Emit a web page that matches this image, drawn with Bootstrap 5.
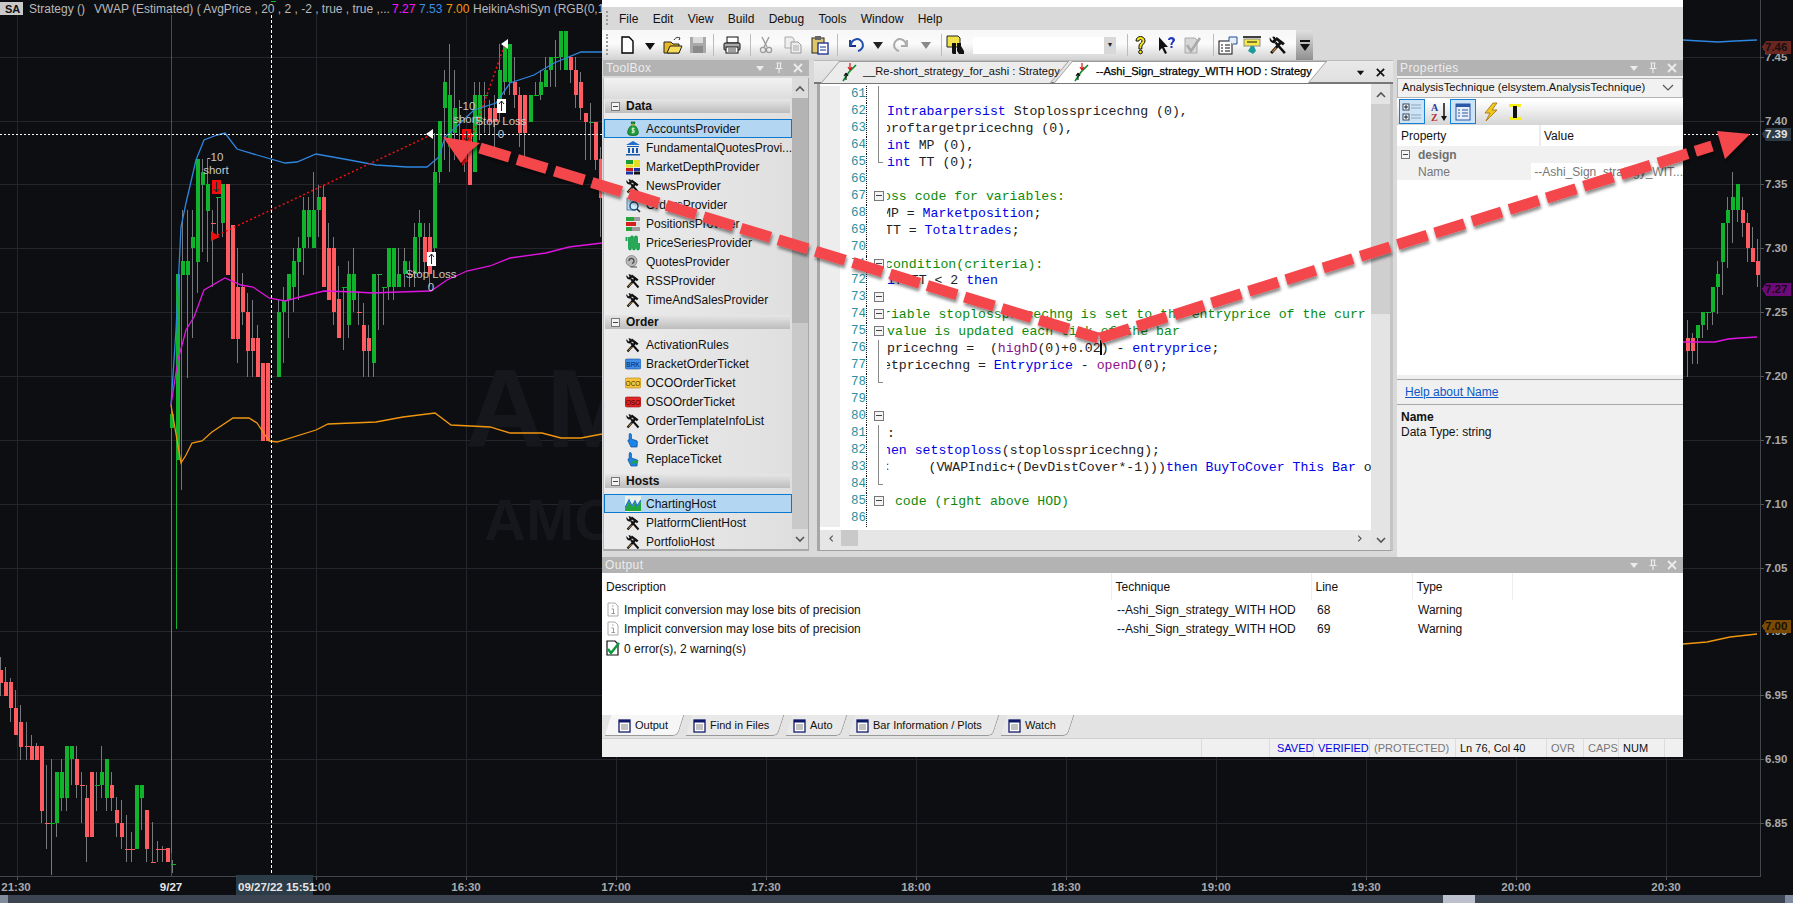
<!DOCTYPE html>
<html lang="en">
<head>
<meta charset="UTF-8">
<title>Strategy editor over chart</title>
<link rel="stylesheet" href="https://cdn.jsdelivr.net/npm/bootstrap@5.3.0/dist/css/bootstrap.min.css">
<style>
body { width:1793px; height:903px; overflow:hidden; background:#0d0e12; margin:0; position:relative; font-family:"Liberation Sans",Arial,sans-serif; font-size:12px; line-height:1; color:#111; }
.chart-svg, .arrow-svg { position:absolute; left:0; top:0; width:1793px; height:903px; }
.chart-svg text { font-family:"Liberation Sans",Arial,sans-serif; }
.arrow-svg { z-index:5; pointer-events:none; }
.app-window { position:absolute; left:602px; top:0; width:1081px; height:757px; background:#d9d9d9; z-index:2; }
.top-strip { height:7px; background:#fff; }
.menu-row { height:23px; padding-left:17px; position:relative; }
.menu-row a { color:#111; text-decoration:none; margin-right:14.3px; }
.grip::before { content:""; position:absolute; left:4px; top:4px; bottom:5px; border-left:2px dotted #999; }
.tool-row { width:711px; height:30px; padding-left:25px; position:relative; background:linear-gradient(#f7f7f7,#fbfbfb 45%,#d2d2d2); display:grid; align-items:center; grid-template-columns:23px 23px 25px 15px 19px 18px 16px 27px 26px 18px 18px 23px 24px 24px 15px 15px 17px 154px 13px 27px 25px 21px 15px 24px 26px 26px 10px; }
.tool-row > svg { width:20px; height:20px; margin-left:-10px; }
.tool-row > .tb-sep { width:1px; height:22px; background:#bcbcbc; margin:0; }
.tb-combo { width:143px; height:17px; background:#fff; display:flex; justify-content:flex-end; margin-left:0; }
.tb-combo span { width:12px; background:#d8d8d8; color:#222; text-align:center; font-size:8px; line-height:15px; }
.tb-end { position:absolute; right:0; top:0; width:17px; height:30px; background:linear-gradient(#e0e0e0,#8f8f8f); display:flex; flex-direction:column; align-items:center; justify-content:center; gap:2px; }
.tb-end i { display:block; }
.tb-end .dash { width:10px; height:2px; background:#111; }
.tb-end .tri { border:5px solid transparent; border-top:7px solid #111; border-bottom:0; }
.main-row { height:491px; }
.dock-title { height:16px; background:#b3b3b3; color:#ececec; padding:0 5px 0 3px; font-size:12px; letter-spacing:.4px; }
.dock-title svg { width:12px; height:12px; margin-left:7px; }
.toolbox-panel { width:206px; margin-left:1px; }
.toolbox-body { height:473px; margin-top:2px; border-left:1px solid #bbb; border-bottom:2px solid #a9a9a9; border-right:1px solid #a9a9a9; background:linear-gradient(90deg,#ececec,#dedede); }
.toolbox-list { width:188px; overflow:hidden; }
.toolbox-top { height:21px; background:linear-gradient(#f2f2f2,#dcdcdc); }
.group-head { height:14px; margin:0 2px 6px 1px; background:linear-gradient(#e6e6e6,#bdbdbd); font-weight:bold; padding-left:6px; gap:6px; }
.fold-box { width:9px; height:9px; border:1px solid #777; background:#f4f4f4; position:relative; display:block; flex:none; }
.fold-box::after { content:""; position:absolute; left:1px; right:1px; top:3px; height:1px; background:#444; }
.tool-group { --bs-list-group-bg:transparent; --bs-list-group-border-width:0; border-radius:0; margin-bottom:0; }
.tool-group .list-group-item { height:19px; padding:0 0 0 21px; display:flex; align-items:center; gap:5px; background:transparent; color:#111; font-size:12px; white-space:nowrap; border:0; }
.tool-group .list-group-item svg { width:16px; height:16px; flex:none; }
.tool-group .list-group-item.picked { background:#b3d7f3; outline:1px solid #0a78cf; outline-offset:-1px; margin-right:0; }
.toolbox-gap { height:6px; }
.scroll-v { width:16px; background:#c9c9c9; }
.scroll-v .thumb { height:225px; background:#b4b4b4; }
.scroll-v span { display:flex; height:20px; align-items:center; justify-content:center; background:#dcdcdc; }
.chev { width:10px; height:7px; }
.editor-panel { width:579px; margin-left:5px; position:relative; }
.doc-tabs { height:24px; position:relative; background:linear-gradient(#e9e9e9,#e0e0e0); border-bottom:2px solid #777; border-top:1px solid #bbb; }
.doc-tab { position:absolute; top:0; height:22px; display:flex; align-items:center; white-space:nowrap; font-size:11.1px; }
.doc-tab::before { content:""; position:absolute; top:0; bottom:0; left:0; right:0; transform:skewX(-40deg); border:1px solid #9d9d9d; border-bottom:0; background:#ececec; z-index:0; }
.doc-tab > * { position:relative; z-index:1; }
.doc-tab svg { width:18px; height:20px; margin-right:4px; flex:none; }
.tab-back { left:16px; width:230px; padding-left:11px; }
.tab-front { left:249px; width:247px; padding-left:10px; color:#000; -webkit-text-stroke:.25px #000; }
.tab-front svg { margin-right:5px; }
.tab-front::before { background:#fff; right:-8px; }
.tab-tools { position:absolute; right:7px; top:6px; gap:9px; }
.tab-tools svg { width:11px; height:11px; }
.editor-frame { height:467px; border-left:3px solid #a7a7a7; border-right:3px solid #c4c4c4; border-bottom:1px solid #a0a0a0; margin-left:3px; margin-right:0; background:#fff; }
.code-area { height:446px; overflow:hidden; }
.code-col { min-width:0; }
.code-line { height:16.96px; display:flex; align-items:center; }
.code-line:first-child { margin-top:2px; }
.gut-col { width:20px; height:100%; background:#ededed; flex:none; }
.num-col { width:27px; height:100%; text-align:right; color:#2b8f9f; font-family:"Liberation Mono",monospace; font-size:12.5px; line-height:17px; border-right:1px dotted #111; flex:none; padding-right:0; }
.fold-col { width:20px; height:100%; flex:none; position:relative; }
.bar::before { content:""; position:absolute; left:11px; top:0; bottom:0; border-left:1px solid #888; }
.hook::before { content:""; position:absolute; left:11px; top:0; height:9px; width:5px; border-left:1px solid #888; border-bottom:1px solid #888; }
.fold-col .fold-box { position:absolute; left:7px; top:3px; width:10px; height:10px; }
.code-text { font-family:"Liberation Mono",monospace; font-size:13.2px; white-space:pre; overflow:hidden; flex:1; min-width:0; color:#222; line-height:17px; }
.kw { color:#0000e6; } .cm { color:#0c8a0c; } .fn { color:#8a0f8a; }
.cut2 { margin-left:-2px; display:inline-block; } .cut4 { margin-left:-4px; display:inline-block; } .cut6 { margin-left:-6px; display:inline-block; }
.caret-bar { display:inline-block; width:0; height:15px; border-left:2px solid #000; margin:0 -1px; vertical-align:-3px; }
.scroll-code { width:19px; background:#e4e4e4; }
.scroll-code .thumb { height:210px; background:#cfcfcf; }
.scroll-code .end { height:20px; display:flex; align-items:center; justify-content:center; flex:none; }
.scroll-h { height:20px; background:#e6e6e6; padding:0 6px 4px; }
.scroll-h .thumb { width:17px; height:16px; background:#c9c9c9; margin-left:5px; }
.props-panel { width:286px; margin-left:4px; background:#f0f0f0; height:497px; position:relative; }
.props-select { height:20px; margin-top:2px; background:#f1f1f1; border:1px solid #b4b4b4; padding:0 4px; font-size:11.2px; }
.props-select svg { width:12px; height:8px; margin-right:4px; }
.props-tools { height:27px; background:linear-gradient(#fff 10%,#d5d5d5); padding-left:2px; }
.props-tools span { width:26px; height:25px; display:flex; align-items:center; justify-content:center; margin-right:5px; }
.props-tools span.on { background:#cde4f7; outline:1px solid #1a7fd0; outline-offset:-1px; }
.props-tools svg { width:20px; height:20px; }
.props-grid { height:250px; background:#fff; }
.props-grid .g-row { display:flex; align-items:center; }
.g-left { width:144px; height:100%; padding-left:4px; }
.g-head { height:21px; }
.g-head .g-left { border-right:2px solid #ececec; display:flex; align-items:center; }
.g-head .g-right { padding-left:3px; }
.g-design { height:17px; background:#f1f1f1; color:#6f6f6f; font-weight:bold; padding-left:4px; gap:8px; }
.g-name { height:17px; }
.g-name .g-left { background:#f1f1f1; color:#777; padding-left:21px; display:flex; align-items:center; }
.g-name .g-right { color:#777; padding-left:3px; white-space:nowrap; }
.props-help { height:26px; border-top:1px solid #a8a8a8; border-bottom:1px solid #a8a8a8; padding-left:8px; margin-top:4px; background:#f0f0f0; }
.props-help a { color:#0a58ca; font-size:12px; }
.props-desc { padding:5px 4px; line-height:15px; }
.output-head { margin-top:6px; height:16px; }
.output-body { height:142px; background:#fff; }
.output-table { --bs-table-bg:transparent; --bs-table-border-color:transparent; table-layout:fixed; width:910px; margin:0; font-size:12px; color:#111; }
.output-table col.c-a { width:509px; } .output-table col.c-b { width:200px; } .output-table col.c-c { width:101px; } .output-table col.c-d { width:100px; }
.output-table th { font-weight:normal; height:27px; padding:0 0 0 4px; vertical-align:middle; border-right:1px solid #eee; }
.output-table td { height:19px; padding:0 0 0 6px; white-space:nowrap; vertical-align:middle; }
.output-table td svg { width:12px; height:15px; vertical-align:-3px; margin-right:5px; margin-left:-1px; }
.output-table td.sumup { padding-left:5px; }
.output-table td.sumup svg { width:15px; height:16px; margin-right:3px; }
.bottom-tabs { height:23px; background:#e3e3e3; padding-left:4px; font-size:11px; }
.out-tab { height:21px; position:relative; display:flex; align-items:center; gap:3px; padding-left:12px; }
.out-tab::before { content:""; position:absolute; inset:0 0 0 8px; transform:skewX(-18deg); border-right:1px solid #999; border-bottom:1px solid #999; border-bottom-right-radius:5px; background:#e9e9e9; }
.out-tab > * { position:relative; }
.out-tab svg { width:14px; height:14px; }
.out-1 { width:75px; } .out-2 { width:100px; } .out-3 { width:63px; } .out-4 { width:152px; } .out-5 { width:75px; }
.out-1::before { background:#f6f6f6; left:2px; }
.status-row { height:19px; background:#f0f0f0; border-top:1px solid #d0d0d0; font-size:11px; }
.status-row > div { height:100%; border-right:1px solid #dcdcdc; padding-left:4px; display:flex; align-items:center; white-space:nowrap; overflow:hidden; }
.st-a { width:600px; } .st-b { width:68px; } .st-c { width:44px; color:#0000e0; padding-left:7px !important; } .st-d { width:56px; color:#0000e0; } .st-e { width:86px; color:#777; } .st-f { width:91px; } .st-g { width:37px; color:#777; } .st-h { width:35px; color:#777; } .st-i { width:46px; }
</style>
</head>
<body>

<svg class="d-none">
  <symbol id="i-tools" viewBox="0 0 16 16"><path d="M2.5 14.5 11 5" stroke="#111" stroke-width="2.2" fill="none"/><path d="M7 1.5l6.5 5-1.6 1.8L5.4 3.2z" fill="#111"/><path d="M13.5 14.5 6 6" stroke="#111" stroke-width="2" fill="none"/><path d="M1.5 2a3.4 3.4 0 0 0 4 4.4L7 4.6 5.4 1.4a3.4 3.4 0 0 0-2 .1L4.6 3.6 3.4 4.6z" fill="#111"/><path d="M3.5 13.5 6.5 10.2" stroke="#d58a2a" stroke-width="1"/></symbol>
  <symbol id="i-bag" viewBox="0 0 16 16"><path d="M6 1h4L9 4c3 2 5 6 4 9-1 2-9 2-10 0-1-3 1-7 4-9z" fill="#1e9c3a" stroke="#0d4f1c" stroke-width=".7"/><rect x="6" y="3.4" width="4" height="1" fill="#e8c93a"/><path d="M9.6 7.4H7.2v2h2v2H6.6M8 6.4v6" stroke="#e8f6d8" fill="none" stroke-width=".9"/></symbol>
  <symbol id="i-bank" viewBox="0 0 16 16"><path d="M8 1 15 5H1z" fill="#1f6fd0"/><path d="M2 6h12v1H2zM3 8h2v5H3zM7 8h2v5H7zM11 8h2v5h-2zM1 14h14v1.5H1z" fill="#1558ad"/></symbol>
  <symbol id="i-depth" viewBox="0 0 16 16"><rect x="1" y="1" width="7" height="4" fill="#1c9c2e"/><rect x="9" y="1" width="6" height="7" fill="#e6e01e"/><rect x="1" y="5.5" width="7" height="3" fill="#e6e01e"/><rect x="1" y="9" width="7" height="3" fill="#c81e1e"/><rect x="9" y="9" width="6" height="3" fill="#1d2f9c"/><rect x="1" y="12.5" width="7" height="3" fill="#1d2f9c"/><rect x="9" y="12.5" width="6" height="3" fill="#111"/></symbol>
  <symbol id="i-orders" viewBox="0 0 16 16"><rect x="2" y="1" width="9" height="12" fill="#b8d2e8" stroke="#2b5d8a" stroke-width=".7"/><circle cx="9" cy="9" r="4" fill="#d7ecfa" stroke="#11507e" stroke-width="1.4"/><path d="M12 12l3 3" stroke="#222" stroke-width="1.6"/></symbol>
  <symbol id="i-pos" viewBox="0 0 16 16"><rect x="1" y="1" width="14" height="4" fill="#9c9c9c"/><rect x="1" y="1" width="8" height="4" fill="#22a53a"/><rect x="1" y="6" width="14" height="4" fill="#ddd"/><rect x="1" y="6" width="10" height="4" fill="#d81f1f"/><rect x="1" y="11" width="14" height="4" fill="#9c9c9c"/><rect x="1" y="11" width="6" height="4" fill="#22a53a"/></symbol>
  <symbol id="i-series" viewBox="0 0 16 16"><path d="M1.5 2v4M4 2v11c0 2 2 2 2 0V3c0-2 2-2 2 0v10c0 2 2 2 2 0V3c0-2 2-2 2 0v10c0 2 2 2 2 0V8" fill="none" stroke="#13a04a" stroke-width="1.8"/></symbol>
  <symbol id="i-quotes" viewBox="0 0 16 16"><circle cx="6.5" cy="7" r="5.5" fill="#b8b8b8" stroke="#666" stroke-width=".6"/><path d="M4 7a2.5 2.5 0 1 1 3 2.4M12 13H5.5" stroke="#444" fill="none" stroke-width="1.2"/></symbol>
  <symbol id="i-hand" viewBox="0 0 16 16"><path d="M5 1.5c1 0 1.4.6 1.4 1.5v4l5 1.6c1 .4 1.2 1.2 1 2.2L12 15H6L3 9c-.3-1 .5-1.5 1-1l.2.2V3c0-1 .2-1.5.8-1.5z" fill="#1c84e6" stroke="#0c4a94" stroke-width=".7"/></symbol>
  <symbol id="i-hand2" viewBox="0 0 16 16"><path d="M5 1.5c1 0 1.4.6 1.4 1.5v4l5 1.6c1 .4 1.2 1.2 1 2.2L12 15H6L3 9c-.3-1 .5-1.5 1-1l.2.2V3c0-1 .2-1.5.8-1.5z" fill="#1c84e6" stroke="#0c4a94" stroke-width=".7"/><path d="M6 13l3-3 2 2 2-3" stroke="#1da43a" stroke-width="1.6" fill="none"/></symbol>
  <symbol id="i-chart" viewBox="0 0 16 16"><rect width="16" height="16" fill="#e8f2ea"/><path d="M0 13 4 5l3 6 3-5 2 5 4-6v10H0z" fill="#22a53a"/><path d="M0 12 4 4l3 6 3-5 2 5 4-6" fill="none" stroke="#1f6fd0" stroke-width="1.3"/></symbol>
  <symbol id="i-doc" viewBox="0 0 14 14"><rect x="1" y="1" width="11" height="12" fill="#fff" stroke="#111a6a" stroke-width="1.3"/><rect x="1" y="1" width="11" height="2.5" fill="#111a6a"/><path d="M3 6h7M3 8h7M3 10h7" stroke="#777" stroke-width=".9"/></symbol>
  <symbol id="i-strat" viewBox="0 0 18 20"><path d="M2 19 8 10 15 3" stroke="#0a8a2a" stroke-width="1.6" fill="none"/><path d="M9 1v7M9 8l-2-3M9 8l2-3" stroke="#d11" stroke-width="1.2" fill="none"/><path d="M5 11v7M5 11l-2 3M5 11l2 3" stroke="#111" stroke-width="1.1" fill="none"/></symbol>
  <symbol id="i-info" viewBox="0 0 12 15"><path d="M1 1h7l3 3v10H1z" fill="#fff" stroke="#aaa"/><path d="M5 4h1.5M4.5 7h2v4.5M4.5 11.5h3.5" stroke="#999" fill="none"/></symbol>
  <symbol id="i-okdoc" viewBox="0 0 15 16"><path d="M1 1h8l3 3v11H1z" fill="#fff" stroke="#111" stroke-width="1.2"/><path d="M2 9l3 4 8-10" stroke="#0a9a3a" stroke-width="2.4" fill="none"/></symbol>
  <symbol id="i-tri" viewBox="0 0 12 12"><path d="M2 4h8L6 9z" fill="currentColor"/></symbol>
  <symbol id="i-pin" viewBox="0 0 12 12"><path d="M3.5 1h5M4.500 1v5M7.500 1v5M2.500 6.500h7M6 6.500V11" stroke="currentColor" stroke-width="1.2" fill="none"/></symbol>
  <symbol id="i-x" viewBox="0 0 12 12"><path d="M2 2l8 8M10 2l-8 8" stroke="currentColor" stroke-width="1.8"/></symbol>
  <symbol id="i-up" viewBox="0 0 10 7"><path d="M1 6l4-4 4 4" stroke="#555" stroke-width="1.600" fill="none"/></symbol>
  <symbol id="i-down" viewBox="0 0 10 7"><path d="M1 1l4 4 4-4" stroke="#555" stroke-width="1.600" fill="none"/></symbol>
  <symbol id="i-left" viewBox="0 0 7 10"><path d="M6 1 2 5l4 4" stroke="#555" stroke-width="1.600" fill="none"/></symbol>
  <symbol id="i-right" viewBox="0 0 7 10"><path d="M1 1l4 4-4 4" stroke="#555" stroke-width="1.600" fill="none"/></symbol>
</svg>

<!-- chart canvas gets filled by the script at the bottom -->
<svg class="chart-svg" id="chart" viewBox="0 0 1793 903" shape-rendering="crispEdges"></svg>

<div class="app-window d-flex flex-column">
  <div class="top-strip"></div>
  <nav class="menu-row grip d-flex align-items-center">
    <a href="#">File</a><a href="#">Edit</a><a href="#">View</a><a href="#">Build</a><a href="#">Debug</a><a href="#">Tools</a><a href="#">Window</a><a href="#">Help</a>
  </nav>
  <div class="tool-row grip">
    <svg viewBox="0 0 20 20"><path d="M5 2h7l4 4v12H5z" fill="#fff" stroke="#000" stroke-width="1.4"/></svg>
    <svg viewBox="0 0 20 20"><path d="M5 8h10l-5 7z" fill="#111"/></svg>
    <svg viewBox="0 0 20 20"><path d="M1 7h7l2 2h6v9H1z" fill="#e6b822" stroke="#222"/><path d="M4 18l3-7h12l-3 7z" fill="#f6dc58" stroke="#222"/><path d="M11 5c2-3 4-3 6-2l-1 2" stroke="#222" fill="none"/></svg>
    <svg viewBox="0 0 20 20"><rect x="2" y="2" width="16" height="16" fill="#a9a9a9"/><rect x="5" y="2" width="10" height="6" fill="#dcdcdc"/><rect x="5" y="11" width="10" height="7" fill="#8a8a8a"/></svg>
    <i class="tb-sep"></i>
    <svg viewBox="0 0 20 20"><rect x="5" y="2" width="11" height="6" fill="#fff" stroke="#111"/><rect x="2" y="8" width="16" height="7" rx="1" fill="#aaa" stroke="#111"/><rect x="4" y="12" width="12" height="6" fill="#fff" stroke="#111"/><path d="M6 14h8M6 16h8" stroke="#111" stroke-width=".8"/></svg>
    <i class="tb-sep"></i>
    <svg viewBox="0 0 20 20"><path d="M6 2l5 10M13 2 8 12" stroke="#9c9c9c" stroke-width="1.4"/><circle cx="7" cy="15" r="2.6" fill="none" stroke="#9c9c9c" stroke-width="1.3"/><circle cx="13" cy="15" r="2.6" fill="none" stroke="#9c9c9c" stroke-width="1.3"/></svg>
    <svg viewBox="0 0 20 20"><path d="M2 2h7l2 2v9H2z" fill="#eee" stroke="#aaa"/><path d="M8 7h7l3 3v8H8z" fill="#eee" stroke="#999"/><path d="M10 11h6M10 13h6M10 15h6" stroke="#aaa"/></svg>
    <svg viewBox="0 0 20 20"><rect x="3" y="3" width="12" height="15" fill="#e0c66a" stroke="#222"/><rect x="6" y="1" width="6" height="4" fill="#666"/><rect x="9" y="8" width="10" height="11" fill="#fff" stroke="#142a8a" stroke-width="1.3"/><path d="M11 12h6M11 15h6" stroke="#142a8a"/></svg>
    <i class="tb-sep"></i>
    <svg viewBox="0 0 20 20"><path d="M5 5v6h6" fill="none" stroke="#142a8a" stroke-width="1.8"/><path d="M6 11a6 6 0 1 1 7 5" fill="none" stroke="#1f4fb0" stroke-width="2"/></svg>
    <svg viewBox="0 0 20 20"><path d="M5 7h10l-5 7z" fill="#222"/></svg>
    <svg viewBox="0 0 20 20"><path d="M15 5v6H9" fill="none" stroke="#aaa" stroke-width="1.8"/><path d="M14 11a6 6 0 1 0-7 5" fill="none" stroke="#aaa" stroke-width="2"/></svg>
    <svg viewBox="0 0 20 20"><path d="M5 7h10l-5 7z" fill="#888"/></svg>
    <i class="tb-sep"></i>
    <svg viewBox="0 0 20 20"><path d="M1 1h11l2 2v9H1z" fill="#f1e14a" stroke="#222"/><path d="M6 8h4v11H7l-1-1zM11 8h4v3l3 5v3h-5l-2-3z" fill="#111"/></svg>
    <div class="tb-combo"><span>&#9662;</span></div>
    <i class="tb-sep"></i>
    <svg viewBox="0 0 20 20"><path d="M6 6c0-6 9-6 9 0 0 3-3 3-3.200 6v2H9v-3c0-3 3-3 3-5 0-2-3-2-3 0z" fill="#f2e21c" stroke="#111"/><circle cx="10.500" cy="17" r="1.800" fill="#f2e21c" stroke="#111"/></svg>
    <svg viewBox="0 0 20 20"><path d="M2 2v14l3-3 3 6 2-1-3-6h4z" fill="#111"/><path d="M11 5c0-4 7-4 7 0 0 2-2.500 2-2.500 5h-2c0-3 2-3 2-5 0-1-2.500-1-2.500 0z" fill="#2036c0"/><rect x="13.500" y="11" width="2" height="2" fill="#2036c0"/></svg>
    <svg viewBox="0 0 20 20"><path d="M3 3h10l2 2v13H3z" fill="#d8d8d8" stroke="#aaa"/><path d="M5 10l4 6 9-13" stroke="#aaa" stroke-width="2.600" fill="none"/></svg>
    <i class="tb-sep"></i>
    <svg viewBox="0 0 20 20"><rect x="1" y="6" width="13" height="13" fill="#fff" stroke="#111"/><path d="M3 10h2M7 10h5M3 13h2M7 13h5M3 16h2M7 16h5" stroke="#111"/><path d="M11 6V2h8v7h-4" fill="#e8eef8" stroke="#1a4f9c"/></svg>
    <svg viewBox="0 0 20 20"><path d="M1 2h18" stroke="#111" stroke-width="1.600"/><rect x="2" y="4" width="16" height="7" fill="#f5e94a" stroke="#888"/><path d="M5 7h10" stroke="#111"/><path d="M9 11l-3 5 5 3 3-3-2-5z" fill="#1d9a9a"/></svg>
    <svg viewBox="0 0 16 16"><use href="#i-tools"/></svg>
    <div class="tb-end"><i class="dash"></i><i class="tri"></i></div>
  </div>

  <div class="main-row d-flex">
    <!-- toolbox -->
    <div class="toolbox-panel">
      <div class="dock-title d-flex align-items-center"><span class="me-auto">ToolBox</span><svg><use href="#i-tri"/></svg><svg><use href="#i-pin"/></svg><svg><use href="#i-x"/></svg></div>
      <div class="toolbox-body d-flex">
        <div class="toolbox-list">
          <div class="toolbox-top"></div>
          <div class="group-head d-flex align-items-center"><i class="fold-box"></i>Data</div>
          <ul class="list-group tool-group">
            <li class="list-group-item picked"><svg><use href="#i-bag"/></svg>AccountsProvider</li>
            <li class="list-group-item"><svg><use href="#i-bank"/></svg>FundamentalQuotesProvi...</li>
            <li class="list-group-item"><svg><use href="#i-depth"/></svg>MarketDepthProvider</li>
            <li class="list-group-item"><svg><use href="#i-tools"/></svg>NewsProvider</li>
            <li class="list-group-item"><svg><use href="#i-orders"/></svg>OrdersProvider</li>
            <li class="list-group-item"><svg><use href="#i-pos"/></svg>PositionsProvider</li>
            <li class="list-group-item"><svg><use href="#i-series"/></svg>PriceSeriesProvider</li>
            <li class="list-group-item"><svg><use href="#i-quotes"/></svg>QuotesProvider</li>
            <li class="list-group-item"><svg><use href="#i-tools"/></svg>RSSProvider</li>
            <li class="list-group-item"><svg><use href="#i-tools"/></svg>TimeAndSalesProvider</li>
          </ul>
          <div class="toolbox-gap"></div>
          <div class="group-head d-flex align-items-center"><i class="fold-box"></i>Order</div>
          <ul class="list-group tool-group">
            <li class="list-group-item"><svg><use href="#i-tools"/></svg>ActivationRules</li>
            <li class="list-group-item"><svg viewBox="0 0 16 16"><rect y="3" width="16" height="10" rx="2" fill="#3f8fe6" stroke="#1a4f9c" stroke-width=".6"/><text x="8" y="10.500" font-size="6.500" text-anchor="middle" fill="#0a1f55">BRK</text></svg>BracketOrderTicket</li>
            <li class="list-group-item"><svg viewBox="0 0 16 16"><rect y="3" width="16" height="10" rx="2" fill="#f5c63a" stroke="#b37a10" stroke-width=".6"/><text x="8" y="10.500" font-size="6.500" text-anchor="middle" fill="#4a2a00">OCO</text></svg>OCOOrderTicket</li>
            <li class="list-group-item"><svg viewBox="0 0 16 16"><rect y="3" width="16" height="10" rx="2" fill="#e52626" stroke="#8a1010" stroke-width=".6"/><text x="8" y="10.500" font-size="6.500" text-anchor="middle" fill="#4a0000">OSO</text></svg>OSOOrderTicket</li>
            <li class="list-group-item"><svg><use href="#i-tools"/></svg>OrderTemplateInfoList</li>
            <li class="list-group-item"><svg><use href="#i-hand"/></svg>OrderTicket</li>
            <li class="list-group-item"><svg><use href="#i-hand2"/></svg>ReplaceTicket</li>
          </ul>
          <div class="toolbox-gap"></div>
          <div class="group-head d-flex align-items-center"><i class="fold-box"></i>Hosts</div>
          <ul class="list-group tool-group">
            <li class="list-group-item picked"><svg><use href="#i-chart"/></svg>ChartingHost</li>
            <li class="list-group-item"><svg><use href="#i-tools"/></svg>PlatformClientHost</li>
            <li class="list-group-item"><svg><use href="#i-tools"/></svg>PortfolioHost</li>
          </ul>
        </div>
        <div class="scroll-v d-flex flex-column"><span><svg class="chev"><use href="#i-up"/></svg></span><div class="thumb"></div><div class="flex-grow-1"></div><span><svg class="chev"><use href="#i-down"/></svg></span></div>
      </div>
    </div>

    <!-- editor -->
    <div class="editor-panel">
      <div class="doc-tabs">
        <div class="doc-tab tab-back"><svg><use href="#i-strat"/></svg><span>__Re-short_strategy_for_ashi : Strategy</span></div>
        <div class="doc-tab tab-front"><svg><use href="#i-strat"/></svg><span>--Ashi_Sign_strategy_WITH HOD : Strategy</span></div>
        <div class="tab-tools d-flex"><svg><use href="#i-tri"/></svg><svg><use href="#i-x"/></svg></div>
      </div>
      <div class="editor-frame d-flex">
        <div class="code-col flex-grow-1 d-flex flex-column">
          <div class="code-area">
            <div class="code-line"><div class="gut-col"></div><div class="num-col">61</div><div class="fold-col bar"></div><div class="code-text"></div></div>
            <div class="code-line"><div class="gut-col"></div><div class="num-col">62</div><div class="fold-col bar"></div><div class="code-text"><span class="kw">Intrabarpersist</span> Stoplosspricechng (0),</div></div>
            <div class="code-line"><div class="gut-col"></div><div class="num-col">63</div><div class="fold-col bar"></div><div class="code-text"><span class="cut4">proftargetpricechng (0),</span></div></div>
            <div class="code-line"><div class="gut-col"></div><div class="num-col">64</div><div class="fold-col bar"></div><div class="code-text"><span class="kw">int</span> MP (0),</div></div>
            <div class="code-line"><div class="gut-col"></div><div class="num-col">65</div><div class="fold-col hook"></div><div class="code-text"><span class="kw">int</span> TT (0);</div></div>
            <div class="code-line"><div class="gut-col"></div><div class="num-col">66</div><div class="fold-col"></div><div class="code-text"></div></div>
            <div class="code-line"><div class="gut-col"></div><div class="num-col">67</div><div class="fold-col"><i class="fold-box"></i></div><div class="code-text cm"><span class="cut4">oss code for variables:</span></div></div>
            <div class="code-line"><div class="gut-col"></div><div class="num-col">68</div><div class="fold-col"></div><div class="code-text"><span class="cut4">MP = <span class="kw">Marketposition</span>;</span></div></div>
            <div class="code-line"><div class="gut-col"></div><div class="num-col">69</div><div class="fold-col"></div><div class="code-text"><span class="cut2">TT = <span class="kw">Totaltrades</span>;</span></div></div>
            <div class="code-line"><div class="gut-col"></div><div class="num-col">70</div><div class="fold-col"></div><div class="code-text"></div></div>
            <div class="code-line"><div class="gut-col"></div><div class="num-col">71</div><div class="fold-col"><i class="fold-box"></i></div><div class="code-text cm"><span class="cut2">condition(criteria):</span></div></div>
            <div class="code-line"><div class="gut-col"></div><div class="num-col">72</div><div class="fold-col"></div><div class="code-text"><span class="kw">if</span> TT &lt; 2 <span class="kw">then</span></div></div>
            <div class="code-line"><div class="gut-col"></div><div class="num-col">73</div><div class="fold-col"><i class="fold-box"></i></div><div class="code-text"></div></div>
            <div class="code-line"><div class="gut-col"></div><div class="num-col">74</div><div class="fold-col"><i class="fold-box"></i></div><div class="code-text cm"><span class="cut4">riable stoplosspricechng is set to the entryprice of the curr</span></div></div>
            <div class="code-line"><div class="gut-col"></div><div class="num-col">75</div><div class="fold-col"><i class="fold-box"></i></div><div class="code-text cm">value is updated each tick of the bar</div></div>
            <div class="code-line"><div class="gut-col"></div><div class="num-col">76</div><div class="fold-col bar"></div><div class="code-text">pricechng =  (<span class="fn">highD</span>(0)+0.02<i class="caret-bar"></i>) - <span class="kw">entryprice</span>;</div></div>
            <div class="code-line"><div class="gut-col"></div><div class="num-col">77</div><div class="fold-col bar"></div><div class="code-text"><span class="cut4">etpricechng = <span class="kw">Entryprice</span> - <span class="fn">openD</span>(0);</span></div></div>
            <div class="code-line"><div class="gut-col"></div><div class="num-col">78</div><div class="fold-col hook"></div><div class="code-text"></div></div>
            <div class="code-line"><div class="gut-col"></div><div class="num-col">79</div><div class="fold-col"></div><div class="code-text"></div></div>
            <div class="code-line"><div class="gut-col"></div><div class="num-col">80</div><div class="fold-col"><i class="fold-box"></i></div><div class="code-text"></div></div>
            <div class="code-line"><div class="gut-col"></div><div class="num-col">81</div><div class="fold-col bar"></div><div class="code-text">:</div></div>
            <div class="code-line"><div class="gut-col"></div><div class="num-col">82</div><div class="fold-col bar"></div><div class="code-text"><span class="cut4"><span class="kw">hen setstoploss</span>(stoplosspricechng);</span></div></div>
            <div class="code-line"><div class="gut-col"></div><div class="num-col">83</div><div class="fold-col bar"></div><div class="code-text"><span class="cut6">&lt;     (VWAPIndic+(DevDistCover*-1)))<span class="kw">then BuyToCover This Bar</span> o</span></div></div>
            <div class="code-line"><div class="gut-col"></div><div class="num-col">84</div><div class="fold-col hook"></div><div class="code-text"></div></div>
            <div class="code-line"><div class="gut-col"></div><div class="num-col">85</div><div class="fold-col"><i class="fold-box"></i></div><div class="code-text cm"> code (right above HOD)</div></div>
            <div class="code-line"><div class="gut-col"></div><div class="num-col">86</div><div class="fold-col"></div><div class="code-text"></div></div>
          </div>
          <div class="scroll-h d-flex align-items-center"><svg class="chev"><use href="#i-left"/></svg><div class="thumb"></div><div class="flex-grow-1"></div><svg class="chev"><use href="#i-right"/></svg></div>
        </div>
        <div class="scroll-code d-flex flex-column"><div class="end"><svg class="chev"><use href="#i-up"/></svg></div><div class="thumb"></div><div class="flex-grow-1"></div><div class="end"><svg class="chev"><use href="#i-down"/></svg></div></div>
      </div>
    </div>

    <!-- properties -->
    <div class="props-panel">
      <div class="dock-title d-flex align-items-center"><span class="me-auto">Properties</span><svg><use href="#i-tri"/></svg><svg><use href="#i-pin"/></svg><svg><use href="#i-x"/></svg></div>
      <div class="props-select d-flex align-items-center justify-content-between"><span>AnalysisTechnique (elsystem.AnalysisTechnique)</span><svg viewBox="0 0 12 8"><path d="M1 1l5 5 5-5" stroke="#555" fill="none" stroke-width="1.200"/></svg></div>
      <div class="props-tools d-flex align-items-center">
        <span class="on"><svg viewBox="0 0 20 20"><rect x="1" y="2" width="6" height="6" fill="#fff" stroke="#345"/><path d="M2 5h4M4 3v4" stroke="#123"/><rect x="1" y="12" width="6" height="6" fill="#fff" stroke="#345"/><path d="M2 15h4M4 13v4" stroke="#123"/><path d="M9 3h10M9 6h10M9 13h10M9 16h10" stroke="#8fa3b8"/></svg></span>
        <svg viewBox="0 0 20 20"><text x="1" y="9" font-size="10" font-weight="bold" fill="#1f3fa0" font-family="Liberation Serif">A</text><text x="1" y="19" font-size="10" font-weight="bold" fill="#b03030" font-family="Liberation Serif">Z</text><path d="M14 1v15" stroke="#111" stroke-width="1.500"/><path d="M11 14h6l-3 5z" fill="#111"/></svg>
        <span class="on"><svg viewBox="0 0 20 20"><rect x="3" y="2" width="14" height="16" fill="#e8eef8" stroke="#2a57a8"/><rect x="3" y="2" width="14" height="3" fill="#2a57a8"/><path d="M5 8h2M9 8h6M5 11h2M9 11h6M5 14h2M9 14h6" stroke="#2a57a8"/></svg></span>
        <svg viewBox="0 0 20 20"><path d="M12 1 4 11h5l-4 8 11-11h-5l5-7z" fill="#f0c81c" stroke="#a06a10" stroke-width=".8"/></svg>
        <svg class="ms-1" viewBox="0 0 20 20"><path d="M4 2h12v3h-4v10h4v3H4v-3h4V5H4z" fill="#f7ee1c"/><path d="M8 4h4v12H8z" fill="#111"/></svg>
      </div>
      <div class="props-grid">
        <div class="g-row g-head"><div class="g-left">Property</div><div class="g-right">Value</div></div>
        <div class="g-row g-design"><i class="fold-box"></i><span>design</span></div>
        <div class="g-row g-name"><div class="g-left">Name</div><div class="g-right">--Ashi_Sign_strategy_WIT...</div></div>
      </div>
      <div class="props-help d-flex align-items-center"><a href="#">Help about Name</a></div>
      <div class="props-desc"><b>Name</b><br>Data Type: string</div>
    </div>
  </div>

  <!-- output -->
  <div class="output-head dock-title d-flex align-items-center"><span class="me-auto">Output</span><svg><use href="#i-tri"/></svg><svg><use href="#i-pin"/></svg><svg><use href="#i-x"/></svg></div>
  <div class="output-body">
    <table class="table table-borderless output-table">
      <colgroup><col class="c-a"><col class="c-b"><col class="c-c"><col class="c-d"></colgroup>
      <thead><tr><th>Description</th><th>Technique</th><th>Line</th><th>Type</th></tr></thead>
      <tbody>
        <tr><td><svg><use href="#i-info"/></svg>Implicit conversion may lose bits of precision</td><td>--Ashi_Sign_strategy_WITH HOD</td><td>68</td><td>Warning</td></tr>
        <tr><td><svg><use href="#i-info"/></svg>Implicit conversion may lose bits of precision</td><td>--Ashi_Sign_strategy_WITH HOD</td><td>69</td><td>Warning</td></tr>
        <tr><td class="sumup"><svg><use href="#i-okdoc"/></svg>0 error(s), 2 warning(s)</td><td></td><td></td><td></td></tr>
      </tbody>
    </table>
  </div>
  <div class="bottom-tabs d-flex">
    <div class="out-tab out-1"><svg><use href="#i-doc"/></svg><span>Output</span></div>
    <div class="out-tab out-2"><svg><use href="#i-doc"/></svg><span>Find in Files</span></div>
    <div class="out-tab out-3"><svg><use href="#i-doc"/></svg><span>Auto</span></div>
    <div class="out-tab out-4"><svg><use href="#i-doc"/></svg><span>Bar Information / Plots</span></div>
    <div class="out-tab out-5"><svg><use href="#i-doc"/></svg><span>Watch</span></div>
  </div>
  <div class="status-row d-flex">
    <div class="st-a"></div><div class="st-b"></div><div class="st-c">SAVED</div><div class="st-d">VERIFIED</div><div class="st-e">(PROTECTED)</div><div class="st-f">Ln 76, Col 40</div><div class="st-g">OVR</div><div class="st-h">CAPS</div><div class="st-i">NUM</div>
  </div>
</div>

<svg class="arrow-svg" viewBox="0 0 1793 903">
  <defs><filter id="soft" x="-5%" y="-20%" width="110%" height="140%"><feDropShadow dx="1" dy="3" stdDeviation="1.500" flood-color="#000" flood-opacity=".45"/></filter></defs>
  <g filter="url(#soft)" fill="#f4474c">
    <path d="M480 148 1098 338" stroke="#f4474c" stroke-width="11" stroke-dasharray="31 8" fill="none"/>
    <path d="M1100 338 1712 146" stroke="#f4474c" stroke-width="11" stroke-dasharray="31 8" fill="none"/>
    <path d="M443 137 480 143 469 152 461 163z"/>
    <path d="M1750 134 1717 131 1725 159z"/>
  </g>
</svg>

<script>
const chart = document.getElementById('chart');
const GREEN = '#10b32c', RED = '#ff5b60', WICK = '#777a7d';

// [colour, bodyTop, bodyBottom, wickTop, wickBottom]
const leftBars = [
  ['r',670,683,657,696],['r',682,696,667,696],['r',682,708,678,722],['r',708,735,690,735],['r',722,747,705,760],
  ['r',746,747,722,760],['r',746,760,735,760],['r',746,760,743,760],['r',746,811,746,823],['r',823,824,765,849],
  ['g',823,823,759,875],['g',772,823,772,837],['g',772,798,759,811],['g',746,798,746,811],['g',746,759,746,785],
  ['r',759,785,746,798],['r',785,786,772,823],['r',798,837,785,862],['r',772,837,772,837],['g',785,786,772,811],
  ['g',772,785,746,798],['g',759,798,759,811],['r',785,798,772,811],['r',810,823,797,837],['r',823,837,800,849],
  ['r',849,850,815,862],['r',849,850,832,862],['g',785,849,785,849],['g',785,798,785,830],['r',810,849,810,862],
  ['r',862,863,822,862],['r',849,850,841,862],['r',849,850,846,862],['r',848,862,848,862],
  ['g',864,865,860,873],
  ['g',274,460,274,460],['g',261,275,210,275],['g',261,275,210,378],['g',237,248,210,338],['g',159,262,159,293],
  ['g',172,185,159,252],['g',184,211,159,262],['r',223,224,210,287],['g',197,198,197,237],['g',184,223,184,237],
  ['r',184,275,184,275],['r',225,339,225,339],['r',287,339,248,363],['r',287,312,273,325],['r',312,351,293,377],
  ['r',338,351,300,377],['r',338,377,325,377],['r',363,441,363,441],['r',363,441,363,441],['g',1,1,1,1],
  ['g',312,377,300,377],['g',300,312,287,363],['g',274,300,274,338],['g',261,287,248,312],['g',248,262,237,300],
  ['g',210,248,197,275],['g',210,237,197,248],['g',210,248,172,248],['g',197,210,185,237],['r',197,287,185,287],
  ['r',248,300,223,300],['r',248,312,237,325],['r',299,338,266,338],['g',287,288,287,350],['g',274,325,261,338],
  ['g',274,300,248,312],['r',312,313,293,325],['r',325,351,303,377],['r',338,351,325,377],['g',274,363,274,377],
  ['g',274,275,274,330],['g',287,287,287,325],['g',248,287,248,300],['g',248,287,248,300],['g',274,287,248,287],
  ['g',261,274,248,287],['r',274,275,261,287],['g',237,274,223,287],['g',223,237,210,274],['r',237,262,223,274],
  ['r',237,274,223,287],['g',172,248,133,252],['g',121,172,121,183],['g',82,108,70,160],['g',95,147,44,172],
  ['g',108,133,70,160],['g',120,121,100,140],['r',133,162,133,172],['r',133,185,133,185],['g',95,172,82,172],
  ['g',95,122,82,140],['g',95,96,82,133],['r',108,122,100,135],['r',108,122,95,147],['g',70,108,44,122],
  ['g',44,82,44,95],['g',44,82,57,95],['r',82,95,57,108],['r',95,133,87,147],['r',95,133,95,160],
  ['g',95,122,95,122],['g',95,96,82,95],['g',82,95,70,100],['g',70,87,57,87],['g',57,70,57,87],
  ['g',57,58,40,87],['g',31,57,31,70],['g',31,70,31,70],['r',57,70,57,83],['r',70,95,57,108],
  ['r',82,108,72,120],['r',113,122,113,160],['g',122,123,103,160],['r',122,160,122,170],['r',159,198,147,237],['r',159,198,147,225]
];
const rightBars = [
  ['r',338,351,320,377],['r',338,351,333,364],['g',325,338,325,364],['g',312,325,312,338],['g',312,313,312,330],
  ['g',287,312,287,325],['g',274,287,261,314],['g',223,262,223,295],['g',210,223,197,268],['g',197,210,172,243],
  ['g',184,210,184,222],['r',210,223,197,237],['r',223,248,213,262],['r',248,262,227,262],['r',261,275,239,287]
];
const vwap = '171,405 176,330 181,227 186,203 196,160 204,140 217,135 225,133 237,149 257,155 285,163 297,162 316,154 344,159 376,165 407,167 427,167 439,157 445,137 455,128 474,110 496,103 510,83 534,75 554,63 581,52 602,52';
const vwapLow = '171,405 178,360 186,330 194,317 204,290 225,278 241,285 253,287 269,298 285,301 300,297 324,291 356,292 372,293 399,292 431,291 447,280 467,271 490,266 510,258 546,253 569,247 602,243';
const vwapHigh = '171,405 181,463 186,455 192,443 202,441 212,432 233,418 249,418 257,423 269,441 277,442 316,430 328,424 376,422 403,417 435,413 451,425 490,427 510,433 542,433 561,438 581,438 602,434';

let out = '';
const add = s => { out += s; };

// grid
[57,121,184,248,312,376,440,504,568,631,695,759,823].forEach(y => add(`<rect x="0" y="${y}" width="1760" height="1" fill="#24262c"/>`));
[17,316,466,616,766,916,1066,1216,1366,1516,1666].forEach(x => add(`<rect x="${x}" y="15" width="1" height="861" fill="#24262c"/><rect x="${x}" y="876" width="1" height="4" fill="#555"/>`));
add('<rect x="171" y="15" width="1" height="861" fill="#8a8a8a" opacity=".5"/>');
add('<rect x="0" y="876" width="1760" height="1" fill="#43464d"/><rect x="1760" y="0" width="1" height="877" fill="#43464d"/>');

// watermark
add('<text x="465" y="447" font-size="112" font-weight="bold" fill="#16171c" shape-rendering="auto">AMC</text>');
add('<text x="484" y="540" font-size="58" font-weight="bold" fill="#16171c">AMC</text>');

function drawBars(list, startX, step) {
  list.forEach((b, i) => {
    const x = Math.round(startX + i * step), col = b[0] === 'g' ? GREEN : RED;
    add(`<rect x="${x}" y="${b[3]}" width="1" height="${b[4] - b[3]}" fill="${WICK}"/>`);
    add(`<rect x="${x - 1.5}" y="${b[1]}" width="${b[2] - b[1] < 2 ? 5 : 4}" height="${Math.max(b[2] - b[1], 1)}" fill="${col}"/>`);
  });
}
drawBars(leftBars, 0.3, 5.04);
drawBars(rightBars, 1687, 5);
// the long first bars after the open
add(`<rect x="171" y="405" width="1" height="448" fill="${GREEN}"/><rect x="170" y="414" width="4" height="14" fill="${GREEN}"/><rect x="176" y="460" width="1" height="169" fill="${GREEN}"/><rect x="181" y="275" width="1" height="215" fill="${GREEN}"/>`);

// study lines
const line = (pts, col) => add(`<polyline points="${pts}" fill="none" stroke="${col}" stroke-width="1.300" shape-rendering="auto"/>`);
line(vwap, '#2e86de'); line(vwapLow, '#e014e0'); line(vwapHigh, '#f0960f');
line('1683,40 1700,41 1718,42 1735,41 1757,40', '#2e86de');
line('1683,342 1700,342 1715,342 1728,339 1740,338 1757,337', '#e014e0');
line('1683,644 1707,642 1730,637 1757,634', '#f0960f');

// trades
add('<g shape-rendering="auto">');
add('<path d="M213.500 237 433 134" stroke="#f01010" stroke-width="1.500" stroke-dasharray="2 2.500" fill="none"/><path d="M463 162 505 44" stroke="#f01010" stroke-width="1.500" stroke-dasharray="2 2.500" fill="none"/>');
add('<path d="M211 231 220 237 211 241z" fill="#f01010"/><path d="M462 157 468 160 462 166z" fill="#f01010"/><path d="M433 129 433 139 426 134z" fill="#fff"/><path d="M508 39 508 49 501 44z" fill="#fff"/>');
const box = (x, y, bg, up) => add(`<rect x="${x}" y="${y}" width="9" height="14" fill="${bg}"/><path d="M${x + 4.500} ${y + 2}v10m-2.500 ${up ? -7 : -3}l2.500 ${up ? -3 : 3} 2.500 ${up ? 3 : -3}" stroke="#222" fill="none"/>`);
box(212, 180, '#f00e0e', false); box(462, 129, '#f00e0e', false); box(427, 252, '#fff', true); box(497, 99, '#fff', true);
add('</g>');
const label = (x, y, t, col, size, extra) => add(`<text x="${x}" y="${y}" fill="${col}" font-size="${size}" shape-rendering="auto" ${extra || ''}>${t}</text>`);
[[215,161,'-10'],[216,174,'short'],[467,110,'-10'],[466,123,'short'],[431,278,'Stop Loss'],[431,291,'0'],[501,125,'Stop Loss'],[501,138,'0']].forEach(l => label(l[0], l[1], l[2], '#c8c8c8', 11.5, 'text-anchor="middle"'));

// crosshair
add('<path d="M0 134.500H1760" stroke="#fff" stroke-dasharray="2 2" shape-rendering="auto"/><path d="M271.500 15V876" stroke="#fff" stroke-dasharray="3 2" shape-rendering="auto"/>');

// header row
add('<rect x="0" y="2" width="23" height="13" fill="#c9c9c9"/>');
label(5, 13, 'SA', '#111', 11, 'font-weight="bold"');
label(29, 13, 'Strategy ()', '#b9b9b9', 12);
label(94, 13, 'VWAP (Estimated) ( AvgPrice , 20 , 2 , -2 , true , true ,...', '#b9b9b9', 12);
label(392, 13, '7.27', '#ff14ff', 12); label(419, 13, '7.53', '#3b90e8', 12); label(446, 13, '7.00', '#f2990f', 12);
label(473, 13, 'HeikinAshiSyn (RGB(0,1', '#b9b9b9', 12);

// price axis
[['7.45',57],['7.40',121],['7.35',184],['7.30',248],['7.25',312],['7.20',376],['7.15',440],['7.10',504],['7.05',568],['6.95',695],['6.90',759],['6.85',823]]
  .forEach(p => { add(`<rect x="1760" y="${p[1]}" width="4" height="1" fill="#555"/>`); label(1765, p[1] + 4, p[0], '#a9a9a9', 11.5, 'font-weight="bold"'); });
label(1765, 635, '7.00', '#a9a9a9', 11.5, 'font-weight="bold"');
const tag = (y, bg, txt, col) => { add(`<path d="M1762 ${y}l4-6h25v13h-25z" fill="${bg}"/>`); label(1765, y + 4, txt, col, 11.5, 'font-weight="bold"'); };
tag(47, '#6a2620', '7.46', '#151010'); tag(134, '#2b3a44', '7.39', '#e6e6e6'); tag(289, '#6d0a78', '7.27', '#140a14'); tag(626, '#7a4a04', '7.00', '#161006');

// time axis
[['21:30',16],['16:30',466],['17:00',616],['17:30',766],['18:00',916],['18:30',1066],['19:00',1216],['19:30',1366],['20:00',1516],['20:30',1666]]
  .forEach(t => label(t[1], 891, t[0], '#a9a9a9', 11.5, 'font-weight="bold" text-anchor="middle"'));
label(171, 891, '9/27', '#e6e6e6', 11.5, 'font-weight="bold" text-anchor="middle"');
label(314, 891, ':00', '#a9a9a9', 11.5, 'font-weight="bold"');
add('<rect x="236" y="875" width="77" height="20" fill="#2c3c46"/>');
label(238, 891, '09/27/22 15:51', '#e6e6e6', 11.5, 'font-weight="bold"');

// scrollbar
add('<rect x="0" y="895" width="1793" height="8" fill="#3b4450"/><rect x="0" y="895" width="8" height="8" fill="#7f8a9a"/><rect x="1443" y="895" width="32" height="8" fill="#bcc0cc"/><rect x="1785" y="895" width="8" height="8" fill="#7f8a9f"/>');

chart.innerHTML = out;
</script>
<script src="https://cdn.jsdelivr.net/npm/bootstrap@5.3.0/dist/js/bootstrap.bundle.min.js"></script>
</body>
</html>
